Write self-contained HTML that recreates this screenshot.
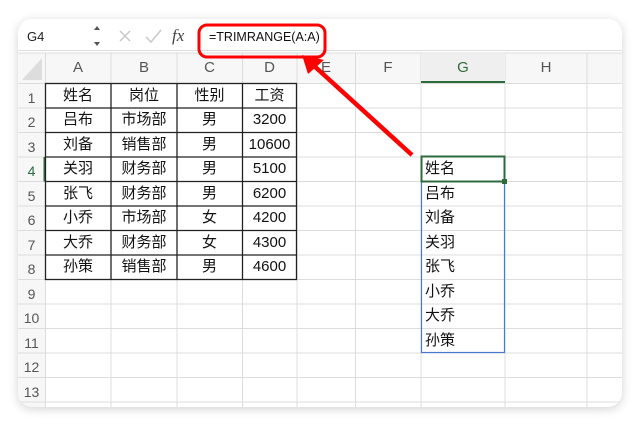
<!DOCTYPE html>
<html><head><meta charset="utf-8"><style>
body{margin:0;width:640px;height:425px;background:#fff;position:relative;overflow:hidden;font-family:"Liberation Sans","Noto Sans CJK SC",sans-serif}
.card{position:absolute;left:18px;top:19px;width:604px;height:388px;border-radius:14px;background:#fff;box-shadow:0 2px 10px rgba(0,0,0,.18)}
.t{position:absolute;height:20px;line-height:20px;font-size:15px;color:#111;text-align:center;white-space:nowrap}
.h{color:#555}
.r{left:18px;width:27px;color:#555;font-size:14px}
.A{left:45px;width:66px}.B{left:111px;width:66px}.C{left:177px;width:65px}.D{left:242px;width:55px}
.G{left:425px;width:80px;text-align:left}
</style></head><body>
<div class="card"></div>
<svg width="640" height="425" style="position:absolute;left:0;top:0">
<defs><clipPath id="c"><rect x="18" y="19" width="604" height="388" rx="14"/></clipPath></defs>
<g clip-path="url(#c)">
<rect x="18" y="53" width="604" height="30" fill="#f7f7f7"/>
<rect x="18" y="83" width="27" height="330" fill="#f7f7f7"/>
<polygon points="22,80 42,80 42,58" fill="#ddd"/>
<line x1="18" y1="50.5" x2="622" y2="50.5" stroke="#ddd"/>
<line x1="18" y1="53" x2="622" y2="53" stroke="#ddd"/>
<g stroke="#dcdcdc" stroke-width="1">
<line x1="45.5" y1="53" x2="45.5" y2="410"/><line x1="111" y1="53" x2="111" y2="410"/><line x1="177" y1="53" x2="177" y2="410"/><line x1="242.5" y1="53" x2="242.5" y2="410"/><line x1="297" y1="53" x2="297" y2="410"/><line x1="355.5" y1="53" x2="355.5" y2="410"/><line x1="421" y1="53" x2="421" y2="410"/><line x1="505" y1="53" x2="505" y2="410"/><line x1="587" y1="53" x2="587" y2="410"/>
<line x1="18" y1="83.5" x2="622" y2="83.5"/><line x1="18" y1="108" x2="622" y2="108"/><line x1="18" y1="132.5" x2="622" y2="132.5"/><line x1="18" y1="157" x2="622" y2="157"/><line x1="18" y1="181.5" x2="622" y2="181.5"/><line x1="18" y1="206" x2="622" y2="206"/><line x1="18" y1="230.5" x2="622" y2="230.5"/><line x1="18" y1="255" x2="622" y2="255"/><line x1="18" y1="279.5" x2="622" y2="279.5"/><line x1="18" y1="304" x2="622" y2="304"/><line x1="18" y1="328.5" x2="622" y2="328.5"/><line x1="18" y1="353" x2="622" y2="353"/><line x1="18" y1="377.5" x2="622" y2="377.5"/><line x1="18" y1="402" x2="622" y2="402"/>
</g>
<rect x="421" y="53" width="84" height="30" fill="#efefef"/>
<line x1="421" y1="82" x2="505" y2="82" stroke="#2e6b3c" stroke-width="2"/>
<line x1="44.5" y1="157" x2="44.5" y2="181.5" stroke="#2e6b3c" stroke-width="2"/>
</g>
<g stroke="#222" stroke-width="1.3" fill="none">
<rect x="45.5" y="83.5" width="251" height="196"/>
<line x1="111" y1="83" x2="111" y2="280"/><line x1="177" y1="83" x2="177" y2="280"/><line x1="242.5" y1="83" x2="242.5" y2="280"/>
<line x1="45" y1="108" x2="297" y2="108"/><line x1="45" y1="132.5" x2="297" y2="132.5"/><line x1="45" y1="157" x2="297" y2="157"/><line x1="45" y1="181.5" x2="297" y2="181.5"/><line x1="45" y1="206" x2="297" y2="206"/><line x1="45" y1="230.5" x2="297" y2="230.5"/><line x1="45" y1="255" x2="297" y2="255"/>
</g>
<rect x="421.5" y="181.5" width="83" height="171" fill="none" stroke="#4a78d0" stroke-width="1.2"/>
<rect x="421.5" y="156.5" width="83" height="25" fill="none" stroke="#2e6b3c" stroke-width="2"/>
<rect x="502" y="179" width="5" height="5" fill="#2e6b3c"/>
<path d="M120 31 L130 41 M130 31 L120 41" stroke="#c8c8c8" stroke-width="1.5"/>
<path d="M146 37 L151 42 L161 30" stroke="#c8c8c8" stroke-width="1.5" fill="none"/>
<path d="M94 30 L97 26 L100 30 Z M94 42 L97 46 L100 42 Z" fill="#555"/>
</svg>
<span class="t" style="left:27px;top:27px;font-size:13px;color:#222">G4</span>
<span class="t" style="left:172px;top:26px;font-size:17px;font-style:italic;font-family:'Liberation Serif',serif;color:#444">fx</span>
<span class="t" style="left:209px;top:27px;font-size:12.5px">=TRIMRANGE(A:A)</span>
<span class="t h A" style="top:58px">A</span><span class="t h B" style="top:58px">B</span><span class="t h C" style="top:58px">C</span><span class="t h D" style="top:58px">D</span>
<span class="t h" style="left:297px;width:58px;top:58px">E</span><span class="t h" style="left:355px;width:66px;top:58px">F</span><span class="t" style="left:421px;width:84px;top:58px;color:#2e6b3c">G</span><span class="t h" style="left:505px;width:82px;top:58px">H</span>
<span class="t r" style="top:88px">1</span><span class="t A" style="top:86px">姓名</span><span class="t B" style="top:86px">岗位</span><span class="t C" style="top:86px">性别</span><span class="t D" style="top:86px">工资</span>
<span class="t r" style="top:112px">2</span><span class="t A" style="top:110px">吕布</span><span class="t B" style="top:110px">市场部</span><span class="t C" style="top:110px">男</span><span class="t D" style="top:110px">3200</span>
<span class="t r" style="top:137px">3</span><span class="t A" style="top:135px">刘备</span><span class="t B" style="top:135px">销售部</span><span class="t C" style="top:135px">男</span><span class="t D" style="top:135px">10600</span>
<span class="t r" style="top:161px;color:#2e6b3c">4</span><span class="t A" style="top:159px">关羽</span><span class="t B" style="top:159px">财务部</span><span class="t C" style="top:159px">男</span><span class="t D" style="top:159px">5100</span>
<span class="t r" style="top:186px">5</span><span class="t A" style="top:184px">张飞</span><span class="t B" style="top:184px">财务部</span><span class="t C" style="top:184px">男</span><span class="t D" style="top:184px">6200</span>
<span class="t r" style="top:210px">6</span><span class="t A" style="top:208px">小乔</span><span class="t B" style="top:208px">市场部</span><span class="t C" style="top:208px">女</span><span class="t D" style="top:208px">4200</span>
<span class="t r" style="top:235px">7</span><span class="t A" style="top:233px">大乔</span><span class="t B" style="top:233px">财务部</span><span class="t C" style="top:233px">女</span><span class="t D" style="top:233px">4300</span>
<span class="t r" style="top:259px">8</span><span class="t A" style="top:257px">孙策</span><span class="t B" style="top:257px">销售部</span><span class="t C" style="top:257px">男</span><span class="t D" style="top:257px">4600</span>
<span class="t r" style="top:284px">9</span><span class="t r" style="top:308px">10</span><span class="t r" style="top:333px">11</span><span class="t r" style="top:357px">12</span><span class="t r" style="top:382px">13</span>
<span class="t G" style="top:159px">姓名</span><span class="t G" style="top:184px">吕布</span><span class="t G" style="top:208px">刘备</span><span class="t G" style="top:233px">关羽</span><span class="t G" style="top:257px">张飞</span><span class="t G" style="top:282px">小乔</span><span class="t G" style="top:306px">大乔</span><span class="t G" style="top:331px">孙策</span>
<svg width="640" height="425" style="position:absolute;left:0;top:0">
<rect x="199" y="25" width="126" height="32" rx="8" fill="none" stroke="#f00" stroke-width="3"/>
<line x1="412" y1="155" x2="312" y2="64" stroke="#f00" stroke-width="4.5"/>
<polygon points="302,55 324,60 308,74" fill="#f00"/>
</svg>
</body></html>
